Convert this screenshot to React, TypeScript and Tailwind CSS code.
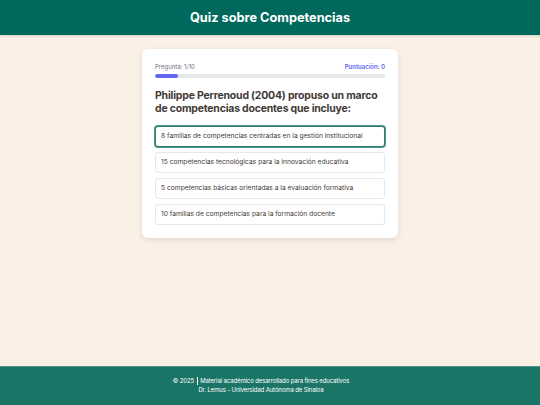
const OPTIONS = [
  "8 familias de competencias centradas en la gestión institucional",
  "15 competencias tecnológicas para la innovación educativa",
  "5 competencias básicas orientadas a la evaluación formativa",
  "10 familias de competencias para la formación docente",
];

export default function App() {
  const current = 1;
  const total = 10;
  const score = 0;

  return (
    <div className="min-h-screen flex flex-col bg-[#faf0e6] font-['Inter',sans-serif]">
      <header className="h-[35px] flex items-center justify-center bg-[#00695c] shadow-[0_1px_2px_rgba(0,0,0,0.15)]">
        <h1 className="text-[12.75px] font-bold text-white">Quiz sobre Competencias</h1>
      </header>

      <main className="flex-1 pt-[14px]">
        <div className="w-[256px] mx-auto bg-white rounded-[6px] p-[13px] shadow-[0_2px_6px_rgba(0,0,0,0.1)]">
          <div className="flex justify-between text-[6px] leading-[9px]">
            <span className="text-gray-500">
              Pregunta: {current}/{total}
            </span>
            <span className="text-[#6366f1] font-semibold">Puntuación: {score}</span>
          </div>
          <div className="mt-[3px] h-[4px] rounded-full bg-gray-200 overflow-hidden">
            <div className="h-full rounded-full bg-[#6366f1]" style={{ width: `${(current / total) * 100}%` }} />
          </div>

          <h2 className="mt-[11px] text-[10.5px] leading-[13px] tracking-[-0.02em] font-bold text-[#433a36]">
            Philippe Perrenoud (2004) propuso un marco de competencias docentes que incluye:
          </h2>

          <div className="mt-[11px] flex flex-col gap-[5px]">
            {OPTIONS.map((opt, i) => (
              <button
                key={opt}
                className={
                  "h-[21px] px-[5px] text-left text-[6.7px] text-[#3f3a38] bg-white rounded-[3px] border " +
                  (i === 0
                    ? "border-[#2e7d72] ring-1 ring-[#4d958b]"
                    : "border-gray-200")
                }
              >
                {opt}
              </button>
            ))}
          </div>
        </div>
      </main>

      <footer className="h-[39px] pr-[18px] pb-[2px] flex flex-col items-center justify-center bg-[#1b7567] text-white text-[6px] leading-[9px] tracking-[-0.02em] border-t border-[#4e9489]">
        <p>
          © 2025 <span className="inline-block align-middle w-px h-[8px] bg-white mx-[1px]" /> Material académico desarrollado para fines educativos
        </p>
        <p>Dr. Lemus - Universidad Autónoma de Sinaloa</p>
      </footer>
    </div>
  );
}
